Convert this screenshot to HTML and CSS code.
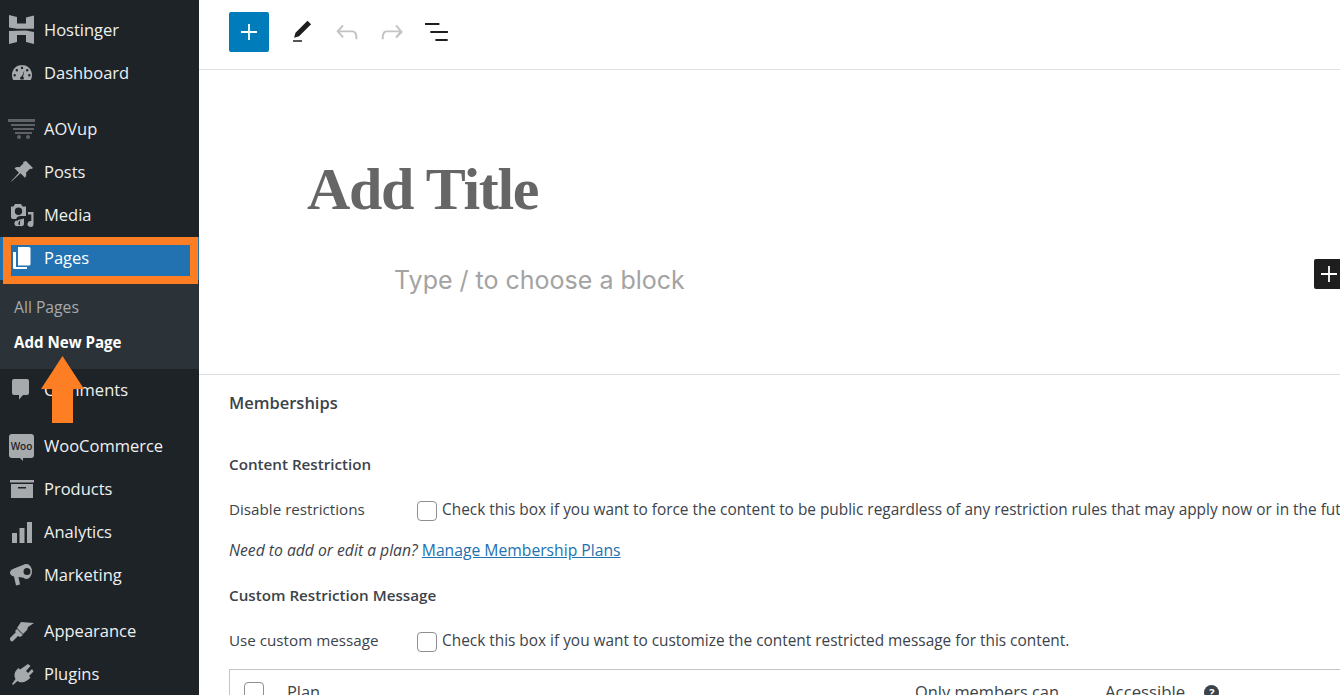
FILE: index.html
```html
<!DOCTYPE html>
<html lang="en">
<head>
    <meta charset="UTF-8">
    <title>Add New Page</title>
    <link rel="stylesheet" href="styles.css">
</head>
<body>
    <div class="layout">
        <nav class="sidebar">
            <a class="menu-item"><svg class="icon icon-logo" viewBox="0 0 25 29"><path d="M0 0l8 2v6.500h9V2.500L25 .5v13.300H8L0 12.500zM0 16l17-.5 8 1.500v12l-8-2v-7H8v7l-8 2z" fill="#a7aaad"/></svg>Hostinger</a>
            <a class="menu-item"><svg class="icon" viewBox="0 0 24 24"><path fill="#a7aaad" fill-rule="evenodd" d="M12 4C6 4 2 8.800 2 14c0 2 .5 3.800 1.300 5h17.400c.8-1.200 1.300-3 1.300-5 0-5.200-4-10-10-10zm0 1.700a1.200 1.200 0 110 2.400 1.200 1.200 0 010-2.400zM6.800 8a1.200 1.200 0 110 2.400 1.200 1.200 0 010-2.400zm10.400 0a1.200 1.200 0 110 2.400 1.200 1.200 0 010-2.400zM4.700 13a1.200 1.200 0 110 2.400 1.200 1.200 0 010-2.400zm14.600 0a1.200 1.200 0 110 2.400 1.200 1.200 0 010-2.400zM14.300 9.500l-1.200 6.300c.5.400.8 1 .8 1.500 0 .5-.2.900-.5 1.200h-2.800c-.3-.3-.5-.7-.5-1.200 0-1 .8-1.900 1.800-2z"/></svg>Dashboard</a>
            <div class="menu-sep"></div>
            <a class="menu-item"><svg class="icon icon-wide" viewBox="0 0 27 20"><path fill="#5f6367" d="M0 0h27v3H0zM3 5h24v2H3zM5 9h21v2H5zM7 13h17v2H7z"/><circle cx="11" cy="18" r="2" fill="#5f6367"/><circle cx="20" cy="18" r="2" fill="#5f6367"/></svg>AOVup</a>
            <a class="menu-item"><svg class="icon" viewBox="0 0 24 24"><path fill="#a7aaad" d="M16 1l7 7-1.500 1-1.500-.3-4 4c.6 2 .2 3.600-1 5l-4.500-4.500L2 21l-1 1 .7-1.500L9 12.800 4.500 8.300c1.400-1.200 3-1.600 5-1l4-4L13.200 2z"/></svg>Posts</a>
            <a class="menu-item"><svg class="icon" viewBox="0 0 24 24"><path fill="#a7aaad" fill-rule="evenodd" d="M5 1h6l1.500 2.500H16V13H10.500A5 5 0 006 16H3a2 2 0 01-2-2V3.500h2.500zM8.500 4.500a3.700 3.700 0 100 7.400 3.700 3.700 0 000-7.400zM18 9h5.500v12a3 3 0 11-2.200-2.900V11.500H18zM8 17l6-1.500v5a2.800 2.800 0 11-2-2.700v-.3l-2 .5v2.500a2.800 2.800 0 11-2-2.700z"/></svg>Media</a>
            <a class="menu-item menu-current"><svg class="icon" viewBox="0 0 24 24"><path fill="#fff" d="M8 1h11a1.500 1.500 0 011.500 1.500V18a1.500 1.500 0 01-1.500 1.500H8z"/><path fill="#fff" d="M3 6h3v15h11v2H4.500A1.500 1.500 0 013 21.500z"/></svg>Pages</a>
            <div class="submenu">
                <a class="submenu-item">All Pages</a>
                <a class="submenu-item submenu-current">Add New Page</a>
            </div>
            <a class="menu-item"><svg class="icon" viewBox="0 0 24 24"><path fill="#a7aaad" d="M4 1h13a2 2 0 012 2v12a2 2 0 01-2 2h-4l-4 4.500V17H4a2 2 0 01-2-2V3a2 2 0 012-2z"/></svg>Comments</a>
            <div class="menu-sep"></div>
            <a class="menu-item"><span class="woo">Woo</span>WooCommerce</a>
            <a class="menu-item"><svg class="icon" viewBox="0 0 24 18"><path fill="#a7aaad" fill-rule="evenodd" d="M0 0h24v2.500H0zM1 4h22v14H1zM8 7v1.500h8V7z"/></svg>Products</a>
            <a class="menu-item"><svg class="icon" viewBox="0 0 24 24"><path fill="#a7aaad" d="M2 13h5v10H2zM9.500 8h5v15h-5zM17 2h5v21h-5z"/></svg>Analytics</a>
            <a class="menu-item"><svg class="icon" viewBox="0 0 24 24"><path fill="#a7aaad" fill-rule="evenodd" d="M16.500 1a5.500 7.500 0 110 15c-1 0-2-.5-3-1.300L8.500 14l1.500 7.500-4 1L4 13.500C1.500 13 0 11.500 0 9.500s2-3.300 4-4l9-3.500c1-.7 2.200-1 3.500-1zm.5 4a3.500 3.500 0 100 7 3.500 3.500 0 000-7z"/></svg>Marketing</a>
            <div class="menu-sep"></div>
            <a class="menu-item"><svg class="icon" viewBox="0 0 24 22"><path fill="#a7aaad" d="M11 2l13 1-6 4-1 3-4 4-6-6zM7 9l6 6-3 2-2-1-5 5c-1 1-3 0-3-2 0-1 .5-1.500 1-2l5-5-1-1z"/></svg>Appearance</a>
            <a class="menu-item"><svg class="icon" viewBox="0 0 24 24"><path fill="#a7aaad" d="M18 2l2.500 2-4.500 5 2 2 4-4 1.500 2.500-4.500 4.500 1.500 1.500-2 2C14 21 10 21 7.500 19L3 23l-1-1 3.500-5C4 14 4 10.500 7 7.500l1.500-1.500L10 7.500z"/></svg>Plugins</a>
        </nav>

        <main class="editor">
            <header class="toolbar">
                <button class="btn-add"><svg viewBox="0 0 24 24" width="24" height="24"><path fill="#fff" d="M11.100 4h1.800v7.100H20v1.800h-7.100V20h-1.800v-7.100H4v-1.800h7.100z"/></svg></button>
                <svg class="tool" viewBox="-2.300 -2.300 28.600 28.600"><path fill="#1e1e1e" d="M20.100 5.100L16.900 2 6.200 12.700l-1.300 4.400 4.500-1.300L20.100 5.100zM4 20.800h8v-1.500H4v1.500z"/></svg>
                <svg class="tool" viewBox="0 0 24 24"><path fill="#c4c4c4" d="M18.300 11.700c-.6-.6-1.400-.9-2.300-.9H6.700l2.900-3.300-1.100-1-4.500 5L8.500 16.500l1.100-1-2.900-3.300H16c.5 0 .9.200 1.300.5 1 1 1 3.400 1 4.500v.3h1.500v-.2c0-1.500 0-4.300-1.500-5.600z"/></svg>
                <svg class="tool" viewBox="0 0 24 24"><path fill="#c4c4c4" d="M15.600 6.500l-1.100 1 2.900 3.300H8c-.9 0-1.700.3-2.300.9-1.400 1.500-1.400 4.200-1.400 5.600v.2h1.500v-.3c0-1.100 0-3.500 1-4.500.3-.3.700-.5 1.300-.5h9.200L14.500 15.500l1.100 1.100 4.600-4.600-4.600-5.500z"/></svg>
                <svg class="tool" viewBox="0 0 24 24"><path fill="#1e1e1e" d="M13.800 5.200H3v1.500h10.800V5.200zm-3.600 6H7v1.500h13.200v-1.500H10.200zM20 17.300h-9.200v1.500H20v-1.500z"/></svg>
            </header>

            <section class="canvas">
                <h1 class="post-title">Add Title</h1>
                <div class="block-row">
                    <p class="block-hint">Type / to choose a block</p>
                    <button class="btn-block"><svg viewBox="0 0 24 24" width="24" height="24"><path fill="#fff" d="M11.100 4h1.800v7.100H20v1.800h-7.100V20h-1.800v-7.100H4v-1.800h7.100z"/></svg></button>
                </div>
            </section>

            <section class="metabox">
                <h2 class="metabox-title">Memberships</h2>
                <h3 class="field-title">Content Restriction</h3>
                <div class="field-row">
                    <span class="field-label">Disable restrictions</span>
                    <span class="checkbox"></span>
                    <span class="field-text">Check this box if you want to force the content to be public regardless of any restriction rules that may apply now or in the future.</span>
                </div>
                <p class="field-note"><em>Need to add or edit a plan?</em> <a class="link">Manage Membership Plans</a></p>
                <h3 class="field-title field-title-second">Custom Restriction Message</h3>
                <div class="field-row">
                    <span class="field-label">Use custom message</span>
                    <span class="checkbox"></span>
                    <span class="field-text">Check this box if you want to customize the content restricted message for this content.</span>
                </div>
                <div class="plan-table">
                    <span class="checkbox"></span>
                    <span class="plan-col-name">Plan</span>
                    <span class="plan-col-members">Only members can</span>
                    <span class="plan-col-access">Accessible</span>
                    <span class="help">?</span>
                </div>
            </section>
        </main>
    </div>

    <!-- annotations on top of the screenshot -->
    <div class="mark-box"></div>
    <svg class="mark-arrow" viewBox="0 0 43 67"><path fill="#fd7e23" d="M21.500 0L43 33H32v34H11V33H0z"/></svg>
</body>
</html>
```

FILE: styles.css
```css
* {
    box-sizing: border-box;
}
body {
    margin: 0;
    height: 695px;
    overflow: hidden;
    font-family: "Open Sans", sans-serif;
    background-color: #fff;
}
.layout {
    display: flex;
    height: 695px;
}
.sidebar {
    width: 199px;
    flex-shrink: 0;
    height: 695px;
    overflow: hidden;
    padding-top: 9px;
    background-color: #1d2327;
}
.menu-item {
    display: flex;
    align-items: center;
    height: 43px;
    padding: 0 0 2px 10px;
    font-size: 16.5px;
    color: #f0f0f1;
}
.menu-sep {
    height: 13px;
}
.menu-current {
    background-color: #2271b1;
    color: #fff;
}
.icon {
    width: 24px;
    height: 24px;
    margin-right: 10px;
    flex-shrink: 0;
}
.icon-logo {
    width: 25px;
    height: 29px;
    margin: 0 10px 0 -1px;
}
.icon-wide {
    width: 27px;
    height: 20px;
    margin: 0 9px 0 -2px;
}
.woo {
    position: relative;
    display: flex;
    align-items: center;
    justify-content: center;
    width: 25px;
    height: 24px;
    margin: 0 10px 0 -1px;
    border-radius: 3px;
    background-color: #a7aaad;
    color: #1d2327;
    font-size: 10px;
    font-weight: 600;
}
.woo::after {
    content: "";
    position: absolute;
    left: 11px;
    bottom: -3px;
    border-top: 3px solid #a7aaad;
    border-left: 3px solid transparent;
}
.submenu {
    height: 89px;
    padding-top: 9px;
    background-color: #2c3338;
}
.submenu-item {
    display: flex;
    align-items: center;
    height: 35px;
    padding-left: 14px;
    font-size: 15.7px;
    color: #a7aaad;
}
.submenu-current {
    font-size: 15.1px;
    font-weight: 700;
    color: #fff;
}
.editor {
    flex: 1;
    min-width: 0;
    overflow: hidden;
}
.toolbar {
    display: flex;
    align-items: center;
    gap: 13px;
    height: 70px;
    padding-left: 30px;
    padding-bottom: 5px;
    border-bottom: 1px solid #e0e0e0;
}
.btn-add {
    display: flex;
    align-items: center;
    justify-content: center;
    width: 40px;
    height: 40px;
    margin-right: 4px;
    padding: 0;
    border: none;
    border-radius: 2px;
    background-color: #007cba;
}
.tool {
    width: 32px;
    height: 32px;
}
.canvas {
    height: 305px;
    padding-top: 84px;
    border-bottom: 1px solid #ddd;
}
.post-title {
    margin: 0 0 0 108px;
    font-family: "Liberation Serif", serif;
    font-size: 60px;
    line-height: 70px;
    letter-spacing: -1.3px;
    font-weight: 700;
    color: #666;
}
.block-row {
    display: flex;
    align-items: flex-start;
    justify-content: space-between;
    margin-top: 35px;
    padding-left: 195px;
}
.block-hint {
    margin: 6px 0 0;
    font-family: Inter, sans-serif;
    font-size: 25px;
    color: #a3a3a3;
}
.btn-block {
    display: flex;
    align-items: center;
    width: 26px;
    height: 30px;
    padding: 0 0 0 3px;
    border: none;
    border-radius: 2px 0 0 2px;
    background-color: #1e1e1e;
    overflow: hidden;
}
.btn-block svg {
    flex-shrink: 0;
}
.metabox {
    padding: 0 0 0 30px;
    color: #3c434a;
    font-size: 15.2px;
}
.metabox-title {
    margin: 0 0 20px;
    height: 57px;
    line-height: 55px;
    font-size: 16.5px;
    font-weight: 600;
}
.field-title {
    margin: 0;
    height: 24px;
    line-height: 24px;
    font-size: 15.2px;
    font-weight: 600;
}
.field-title-second {
    margin-top: 21px;
}
.field-row {
    display: flex;
    align-items: center;
    height: 24px;
    margin-top: 21px;
    white-space: nowrap;
}
.field-label {
    width: 188px;
    flex-shrink: 0;
}
.field-text {
    font-size: 15.4px;
}
.checkbox {
    display: block;
    width: 20px;
    height: 20px;
    margin: 3px 5px 0 0;
    flex-shrink: 0;
    border: 1px solid #8c8f94;
    border-radius: 4px;
    background-color: #fff;
}
.field-note {
    margin: 17px 0 0;
    height: 24px;
    line-height: 24px;
    font-size: 15.7px;
}
.link {
    color: #2271b1;
    text-decoration: underline;
}
.plan-table {
    display: flex;
    align-items: flex-start;
    height: 60px;
    margin-top: 17px;
    padding: 9px 0 0 14px;
    border: 1px solid #c3c4c7;
    border-right: none;
    font-size: 16.4px;
}
.plan-col-name {
    width: 628px;
    margin-left: 18px;
    margin-top: 1px;
}
.plan-col-members {
    width: 190px;
    margin-top: 1px;
}
.plan-col-access {
    margin-top: 1px;
    font-size: 16.8px;
}
.help {
    display: flex;
    align-items: center;
    justify-content: center;
    width: 15px;
    height: 15px;
    margin: 6px 0 0 19px;
    border-radius: 50%;
    background-color: #3c434a;
    color: #fff;
    font-size: 11px;
    font-weight: 700;
}
.mark-box {
    position: absolute;
    left: 3px;
    top: 237px;
    width: 195px;
    height: 47px;
    border: 8px solid #fd7e23;
}
.mark-arrow {
    position: absolute;
    left: 41px;
    top: 356px;
    width: 43px;
    height: 67px;
}
```
